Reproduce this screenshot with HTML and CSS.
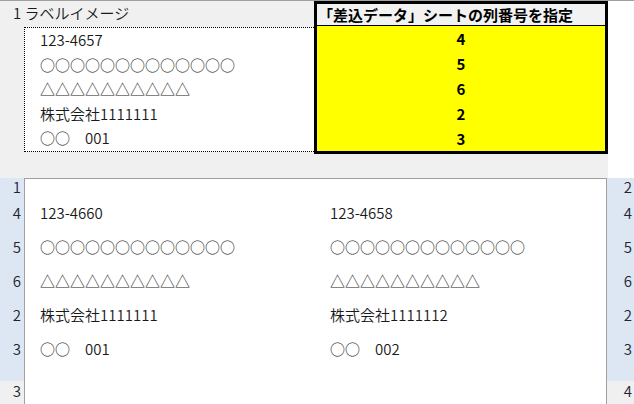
FILE: index.html
```html
<!DOCTYPE html>
<html lang="ja">
<head>
    <meta charset="UTF-8">
    <meta name="viewport" content="width=device-width, initial-scale=1.0">
    <title>ラベル印刷</title>
    <link rel="stylesheet" href="styles.css">
</head>

<body>
    <div class="sheet">
        <!-- 上段: ラベルイメージと列番号の指定 -->
        <div class="upper">
            <div class="preview">
                <div class="preview-title">1 ラベルイメージ</div>
                <div class="label-box">
                    <div class="label-line">123-4657</div>
                    <div class="label-line">○○○○○○○○○○○○○</div>
                    <div class="label-line">△△△△△△△△△△</div>
                    <div class="label-line">株式会社1111111</div>
                    <div class="label-line">○○　001</div>
                </div>
            </div>
            <div class="colmap">
                <div class="colmap-head">「差込データ」シートの列番号を指定</div>
                <div class="colmap-row">4</div>
                <div class="colmap-row">5</div>
                <div class="colmap-row">6</div>
                <div class="colmap-row">2</div>
                <div class="colmap-row">3</div>
            </div>
        </div>

        <!-- 下段: 印刷ページ -->
        <div class="pages">
            <div class="num">1</div>
            <div class="cell cell-top"></div>
            <div class="cell cell-top"></div>
            <div class="num num-r">2</div>

            <div class="num">4</div>
            <div class="cell">123-4660</div>
            <div class="cell">123-4658</div>
            <div class="num num-r">4</div>

            <div class="num">5</div>
            <div class="cell">○○○○○○○○○○○○○</div>
            <div class="cell">○○○○○○○○○○○○○</div>
            <div class="num num-r">5</div>

            <div class="num">6</div>
            <div class="cell">△△△△△△△△△△</div>
            <div class="cell">△△△△△△△△△△</div>
            <div class="num num-r">6</div>

            <div class="num">2</div>
            <div class="cell">株式会社1111111</div>
            <div class="cell">株式会社1111112</div>
            <div class="num num-r">2</div>

            <div class="num">3</div>
            <div class="cell">○○　001</div>
            <div class="cell">○○　002</div>
            <div class="num num-r">3</div>

            <div class="num"></div>
            <div class="cell"></div>
            <div class="cell"></div>
            <div class="num num-r"></div>

            <div class="num num-out">3</div>
            <div class="cell"></div>
            <div class="cell"></div>
            <div class="num num-r num-out">4</div>
        </div>
    </div>
</body>
</html>
```

FILE: styles.css
```css
body {
    margin: 0;
    background-color: #fff;
    font-family: "Noto Sans CJK JP", "Noto Sans", sans-serif;
    font-size: 15px;
    font-weight: 350;
    color: #1a1a1a;
}

.sheet {
    border-top: 1px solid #a0a0a0;
}

/* 上段 */
.upper {
    width: 608px;
    height: 177px;
    display: flex;
    align-items: flex-start;
    background-color: #f0f0f0;
}
.preview {
    width: 314px;
}
.preview-title {
    height: 26px;
    line-height: 23px;
    padding-left: 13px;
}
.label-box {
    margin-left: 24px;
    height: 125px;
    box-sizing: border-box;
    border: 1px dotted #000;
    border-right: none;
    background-color: #fff;
}
.label-line {
    height: 24.6px;
    line-height: 23.6px;
    padding-left: 15px;
    white-space: nowrap;
}

.colmap {
    width: 294px;
    height: 153px;
    box-sizing: border-box;
    border: 3px solid #000;
    background-color: #ffff00;
}
.colmap-head {
    height: 21px;
    line-height: 21px;
    padding-left: 1px;
    border-bottom: 1px solid #000;
    background-color: #f2f2f2;
    font-weight: bold;
    color: #000;
    white-space: nowrap;
}
.colmap-row {
    height: 25px;
    line-height: 25px;
    text-align: center;
    font-weight: bold;
    color: #000;
}

/* 下段 */
.pages {
    display: grid;
    grid-template-columns: 25px 290px 291px 28px;
    grid-template-rows: 17px repeat(5, 34px) 16px 30px;
}
.num {
    display: flex;
    align-items: center;
    justify-content: flex-end;
    padding-right: 3px;
    border-right: 1px solid #a0a0a0;
    background-color: #dde7f3;
    color: #1f2430;
}
.num-r {
    padding-right: 2px;
    border-right: none;
    border-left: 1px solid #a0a0a0;
}
.num-out {
    align-items: flex-start;
    line-height: 19px;
    background-color: #f0f0f0;
}
.cell {
    display: flex;
    align-items: center;
    padding-left: 15px;
    background-color: #fff;
    white-space: nowrap;
}
.cell-top {
    border-top: 1px solid #a0a0a0;
}
```
